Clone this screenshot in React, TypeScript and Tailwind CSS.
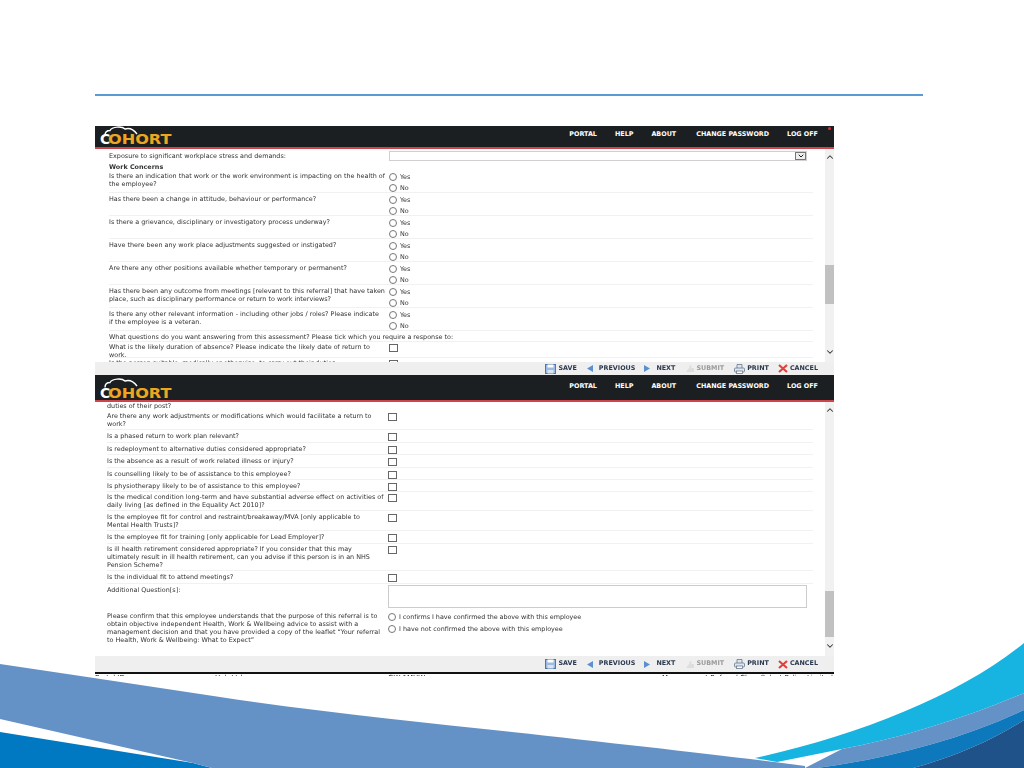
import React from "react";
import { ChevronDown, ChevronUp } from "lucide-react";

const FONT = "font-['DejaVu_Sans',sans-serif]";

function Lines({ t }: { t: string[] }) {
  return (
    <>
      {t.map((l, i) => (
        <React.Fragment key={i}>
          {i > 0 && <br />}
          {l}
        </React.Fragment>
      ))}
    </>
  );
}

function Radio({ label, cls = "" }: { label: string; cls?: string }) {
  return (
    <div className="flex items-center h-[11px] gap-[3px]">
      <span className="w-[8px] h-[8px] rounded-full border border-[#777] bg-white shrink-0" />
      <span className={cls}>{label}</span>
    </div>
  );
}

function Check({ cls = "mt-[1px]" }: { cls?: string }) {
  return <span className={`block w-[9px] h-[8px] border border-[#666] bg-white ${cls}`} />;
}

function RadioRow({ q, cls }: { q: string[]; cls: string }) {
  return (
    <div className={`flex border-b border-[#f1f1f1] mr-[12px] ml-[14px] ${cls}`}>
      <div className="w-[280px] shrink-0 pt-[1px]">
        <Lines t={q} />
      </div>
      <div>
        <Radio label="Yes" />
        <Radio label="No" />
      </div>
    </div>
  );
}

function CheckRow({ q, cls }: { q: string[]; cls: string }) {
  return (
    <div className={`flex border-b border-[#f1f1f1] mr-[12px] ml-[12px] ${cls}`}>
      <div className="w-[281px] shrink-0">
        <Lines t={q} />
      </div>
      <Check />
    </div>
  );
}

function Scrollbar({ thumb }: { thumb: string }) {
  return (
    <div className="w-[9px] shrink-0 bg-[#f1f1f1] flex flex-col items-center text-[#333]">
      <ChevronUp size={10} strokeWidth={2.5} className="mt-[3px] shrink-0" />
      <div className={`w-full bg-[#c1c1c1] ${thumb}`} />
      <div className="flex-1" />
      <ChevronDown size={10} strokeWidth={2.5} className="mb-[5px] shrink-0" />
    </div>
  );
}

function Logo({ cloud, pad }: { cloud: string; pad: string }) {
  return (
    <div className={`relative h-full w-[90px] flex items-end pl-[5px] font-['DejaVu_Sans',sans-serif] font-bold text-[14px] leading-[10px] ${pad}`}>
      <svg
        className={`absolute left-[9px] ${cloud}`}
        width="34"
        height="10"
        viewBox="0 0 34 10"
        fill="none"
        stroke="#fff"
        strokeWidth="1.4"
      >
        <path d="M1 9.5C1 6 3 4.5 6 4.5C8 0.5 18 0 21 3C26 1.5 30 4 33 8" />
      </svg>
      <span className="text-white -mr-[2px]">C</span>
      <span className="inline-block origin-left scale-x-[1.15] text-[#eda61f]">OHORT</span>
    </div>
  );
}

function Header({ h, navCls, cloud, pad }: { h: string; navCls: string; cloud: string; pad: string }) {
  return (
    <div className={`flex items-stretch justify-between bg-[#1c1f22] border-b-2 border-[#cf4448] ${h} relative`}>
      <Logo cloud={cloud} pad={pad} />
      <div className={`flex items-center text-white font-bold text-[6.4px] ${navCls}`}>
        <span className="mr-[18px]">PORTAL</span>
        <span className="mr-[18px]">HELP</span>
        <span className="mr-[20px]">ABOUT</span>
        <span className="mr-[18px]">CHANGE PASSWORD</span>
        <span>LOG OFF</span>
      </div>
    </div>
  );
}

function Toolbar({ cls }: { cls: string }) {
  return (
    <div className={`flex items-center justify-end bg-[#efefef] font-bold text-[6.4px] text-[#2c3a50] ${cls}`}>
      <svg width="11" height="10" viewBox="0 0 11 10" className="mr-[2px]">
        <rect x="0.5" y="0.5" width="10" height="9" fill="#9dbbe0" stroke="#4d78ad" />
        <rect x="2.5" y="0.5" width="6" height="3" fill="#fff" />
        <rect x="2.5" y="6" width="6" height="3.5" fill="#d9e4f2" />
      </svg>
      <span>SAVE</span>
      <svg width="6" height="7" viewBox="0 0 6 7" className="ml-[10px] mr-[6px]">
        <path d="M6 0V7L0 3.5Z" fill="#5a8fd0" />
      </svg>
      <span>PREVIOUS</span>
      <svg width="6" height="7" viewBox="0 0 6 7" className="ml-[9px] mr-[6px]">
        <path d="M0 0V7L6 3.5Z" fill="#5a8fd0" />
      </svg>
      <span>NEXT</span>
      <svg width="8" height="7" viewBox="0 0 8 7" className="ml-[11px] mr-[2px]">
        <path d="M0 7L3 3L4 0L6 1L5 3H8V7Z" fill="#dcdfdc" />
      </svg>
      <span className="text-[#9a9a9a]">SUBMIT</span>
      <svg width="11" height="10" viewBox="0 0 11 10" className="ml-[10px] mr-[2px]" fill="#dfe5ec" stroke="#66788f" strokeWidth="0.8">
        <path d="M3 4V0.5H8V4" />
        <rect x="0.5" y="4" width="10" height="4" rx="1" />
        <rect x="2.5" y="7" width="6" height="2.5" fill="#fff" />
      </svg>
      <span>PRINT</span>
      <svg width="10" height="9" viewBox="0 0 10 9" className="ml-[9px] mr-[2px]" stroke="#e2413b" strokeWidth="2.2">
        <path d="M1 1L9 8M9 1L1 8" />
      </svg>
      <span>CANCEL</span>
    </div>
  );
}

function Swoosh() {
  return (
    <svg className="absolute left-0 top-0" width="1024" height="768" viewBox="0 0 1024 768">
      <path d="M0 732L193 763L212 768H0Z" fill="#0079c2" />
      <path d="M0 664L94 678L220 697C320 712 420 722 512 732C620 744 730 756 805 766V768H212L193 763L0 719Z" fill="#6592c6" />
      <path d="M755 758C860 735 960 695 1024 643V693C960 720 900 738 842 749L777 762Z" fill="#17b3e1" />
      <path d="M842 749C900 738 960 720 1024 693V710C960 740 890 758 817 768H805Z" fill="#6592c6" />
      <path d="M817 768C890 758 960 740 1024 710V720C990 742 950 758 913 768Z" fill="#0e78bd" />
      <path d="M913 768C950 758 990 742 1024 720V768Z" fill="#1f5288" />
    </svg>
  );
}

export default function App() {
  return (
    <div className={`relative w-[1024px] h-[768px] overflow-hidden bg-white ${FONT}`}>
      <Swoosh />
      <div className="relative pt-[94px]">
        <div className="ml-[95px] w-[828px] h-[2px] bg-[#5b9bd5]" />

        <div className="ml-[95px] mt-[30px] w-[739px] blur-[0.5px]">
          {/* first capture */}
          <div className="relative">
            <Header h="h-[23px]" navCls="pr-[16px] pb-[3px]" cloud="bottom-[11px]" pad="pb-[3px]" />
            <span className="absolute right-[3px] top-[1px] w-[3px] h-[3px] rounded-full bg-[#d0343c]" />
          </div>
          <div className="flex h-[213px] overflow-hidden bg-white text-[#333] text-[6.42px] leading-[8px] whitespace-nowrap">
            <div className="flex-1 min-w-0">
              <div className="flex ml-[14px] mr-[18px] h-[14px] items-center">
                <div className="w-[280px] shrink-0">Exposure to significant workplace stress and demands:</div>
                <div className="flex-1 h-[10px] border border-[#d0d0d0] flex justify-end">
                  <span className="w-[11px] h-full border border-[#777] bg-[#eee] flex items-center justify-center text-[#222]">
                    <ChevronDown size={8} strokeWidth={3} />
                  </span>
                </div>
              </div>
              <div className="ml-[14px] h-[8px] font-bold">Work Concerns</div>
              <RadioRow cls="h-[22px]" q={["Is there an indication that work or the work environment is impacting on the health of", "the employee?"]} />
              <RadioRow cls="h-[23px] pt-[1px]" q={["Has there been a change in attitude, behaviour or performance?"]} />
              <RadioRow cls="h-[23px] pt-[1px]" q={["Is there a grievance, disciplinary or investigatory process underway?"]} />
              <RadioRow cls="h-[23px] pt-[1px]" q={["Have there been any work place adjustments suggested or instigated?"]} />
              <RadioRow cls="h-[23px] pt-[1px]" q={["Are there any other positions available whether temporary or permanent?"]} />
              <RadioRow cls="h-[23px] pt-[1px]" q={["Has there been any outcome from meetings [relevant to this referral] that have taken", "place, such as disciplinary performance or return to work interviews?"]} />
              <RadioRow cls="h-[23px] pt-[1px]" q={["Is there any other relevant information - including other jobs / roles? Please indicate", "if the employee is a veteran."]} />
              <div className="ml-[14px] mr-[12px] h-[11px] pt-[2px] border-b border-[#f1f1f1]">
                What questions do you want answering from this assessment? Please tick which you require a response to:
              </div>
              <div className="flex ml-[14px] mr-[12px] h-[16px] pt-[1px] border-b border-[#f1f1f1]">
                <div className="w-[280px] shrink-0">
                  What is the likely duration of absence? Please indicate the likely date of return to
                  <br />
                  work.
                </div>
                <Check />
              </div>
              <div className="flex ml-[14px] mr-[12px] h-[8px] pt-[1px]">
                <div className="w-[280px] shrink-0">Is the person suitable, medically or otherwise, to carry out their duties</div>
                <Check />
              </div>
            </div>
            <Scrollbar thumb="mt-[103px] h-[39px]" />
          </div>
          <Toolbar cls="h-[13px] pr-[16px]" />

          {/* second capture */}
          <Header h="h-[27px]" navCls="pr-[16px] pb-[2px]" cloud="bottom-[12px]" pad="pb-[2px]" />
          <div className="flex h-[254px] overflow-hidden bg-white text-[#333] text-[6.42px] leading-[8px] whitespace-nowrap">
            <div className="flex-1 min-w-0">
              <div className="ml-[12px] h-[9px]">duties of their post?</div>
              <CheckRow cls="h-[19px] pt-[1px]" q={["Are there any work adjustments or modifications which would facilitate a return to", "work?"]} />
              <CheckRow cls="h-[13px] pt-[2px]" q={["Is a phased return to work plan relevant?"]} />
              <CheckRow cls="h-[12px] pt-[2px]" q={["Is redeployment to alternative duties considered appropriate?"]} />
              <CheckRow cls="h-[13px] pt-[2px]" q={["Is the absence as a result of work related illness or injury?"]} />
              <CheckRow cls="h-[12px] pt-[2px]" q={["Is counselling likely to be of assistance to this employee?"]} />
              <CheckRow cls="h-[12px] pt-[2px]" q={["Is physiotherapy likely to be of assistance to this employee?"]} />
              <CheckRow cls="h-[19px] pt-[1px]" q={["Is the medical condition long-term and have substantial adverse effect on activities of", "daily living [as defined in the Equality Act 2010]?"]} />
              <CheckRow cls="h-[20px] pt-[2px]" q={["Is the employee fit for control and restraint/breakaway/MVA [only applicable to", "Mental Health Trusts]?"]} />
              <CheckRow cls="h-[13px] pt-[2px]" q={["Is the employee fit for training [only applicable for Lead Employer]?"]} />
              <CheckRow cls="h-[27px] pt-[1px]" q={["Is ill health retirement considered appropriate? If you consider that this may", "ultimately result in ill health retirement, can you advise if this person is in an NHS", "Pension Scheme?"]} />
              <CheckRow cls="h-[13px] pt-[2px]" q={["Is the individual fit to attend meetings?"]} />
              <div className="flex ml-[12px] mr-[18px] h-[26px] pt-[1px]">
                <div className="w-[281px] shrink-0 pt-[1px]">Additional Question[s]:</div>
                <div className="flex-1 h-[23px] border border-[#ccc] bg-white" />
              </div>
              <div className="flex ml-[12px] mr-[12px] pt-[2px]">
                <div className="w-[281px] shrink-0">
                  <Lines t={["Please confirm that this employee understands that the purpose of this referral is to", "obtain objective independent Health, Work & Wellbeing advice to assist with a", "management decision and that you have provided a copy of the leaflet \u201CYour referral", "to Health, Work & Wellbeing: What to Expect\u201D"]} />
                </div>
                <div className="flex flex-col gap-[1px] -mt-[1px]">
                  <Radio label="I confirms I have confirmed the above with this employee" cls="tracking-[-0.05px]" />
                  <Radio label="I have not confirmed the above with this employee" />
                </div>
              </div>
            </div>
            <Scrollbar thumb="mt-[176px] h-[46px]" />
          </div>
          <Toolbar cls="h-[16px] pr-[16px]" />
          <div className="h-[2px] bg-[#111]" />
          <div className="h-[2px] overflow-hidden bg-white flex text-[7px] leading-[8px] text-[#111] whitespace-nowrap">
            <span className="w-[120px]">Portal ID</span>
            <span className="w-[173px]">Hub Ltd</span>
            <span className="w-[274px]">GW-1MHW</span>
            <span>Management Referral Class Select Policy Limited</span>
          </div>
        </div>
      </div>
    </div>
  );
}
